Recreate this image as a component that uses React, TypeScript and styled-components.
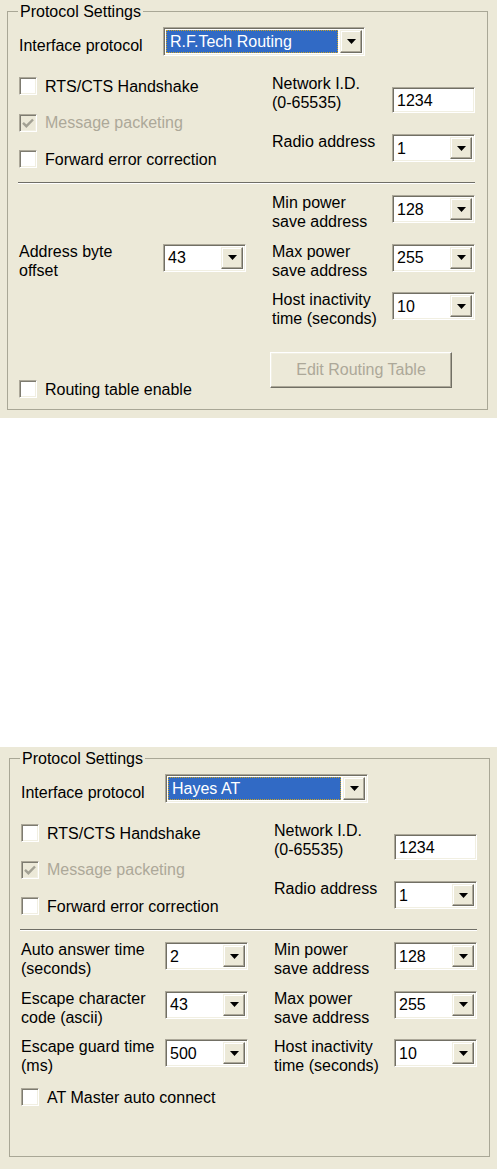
import React from 'react';
import styled, { createGlobalStyle } from 'styled-components';

const GlobalStyle = createGlobalStyle`
  html, body { margin: 0; padding: 0; background: #ffffff; }
  body {
    font-family: "Liberation Sans", Arial, sans-serif;
    font-size: 16px;
    color: #000000;
  }
  * { box-sizing: border-box; }
`;

const COLUMNS = '144px 83px 26px 120px 83px';

const Page = styled.main`
  width: 497px;
  display: flex;
  flex-direction: column;
  gap: 329px;
`;

const Panel = styled.section<{ $shift: number; $height: number }>`
  height: ${(p) => p.$height}px;
  background: #ece9d8;
  padding: 2px 0 0 ${(p) => 7 + p.$shift}px;
`;

const GroupBox = styled.fieldset`
  margin: 0;
  width: 481px;
  height: 408px;
  min-inline-size: 0;
  padding: 6px 11px 0 11px;
  border: 1px solid #a9a796;
  border-radius: 0;
`;

const Legend = styled.legend`
  padding: 0 2px;
  margin-left: -1px;
  line-height: 19px;
  font-size: 16px;
`;

const InterfaceRow = styled.div`
  display: flex;
  align-items: flex-end;
  height: 29px;
`;

const RowLabel = styled.span`
  width: 144px;
  line-height: 19px;
  margin-bottom: 1px;
`;

const UpperBody = styled.div`
  display: grid;
  grid-template-columns: 253px 203px;
  height: 126px;
`;

const CheckColumn = styled.div`
  display: flex;
  flex-direction: column;
  padding-top: 21px;
  gap: 18.5px;
`;

const FieldColumn = styled.div`
  display: flex;
  flex-direction: column;
  padding-top: 18px;
`;

const NetworkField = styled.div`
  display: flex;
  align-items: flex-start;
  height: 58px;
`;

const RadioField = styled.div`
  display: flex;
  align-items: flex-start;
`;

const FieldLabel = styled.span`
  width: 120px;
  line-height: 19px;
  white-space: pre-line;
`;

const ControlSlot = styled.div<{ $top: number }>`
  padding-top: ${(p) => p.$top}px;
`;

const Separator = styled.hr`
  margin: 0 0 0 -1px;
  width: 457px;
  height: 2px;
  border: 0;
  border-top: 1px solid #6f6e66;
  border-bottom: 1px solid #ffffff;
`;

const LowerGrid = styled.div`
  display: grid;
  grid-template-columns: ${COLUMNS};
  grid-template-rows: repeat(3, 48.5px);
  margin-top: 9px;
`;

const GridLabel = styled.span<{ $col: number; $row: number }>`
  grid-column: ${(p) => p.$col};
  grid-row: ${(p) => p.$row};
  line-height: 19px;
  white-space: pre-line;
`;

const GridControl = styled.div<{ $col: number; $row: number }>`
  grid-column: ${(p) => p.$col};
  grid-row: ${(p) => p.$row};
  padding-top: 2px;
`;

const Footer = styled.div`
  display: grid;
  grid-template-columns: 253px 203px;
  align-items: start;
`;

const FooterCheck = styled.div<{ $top: number }>`
  margin-top: ${(p) => p.$top}px;
`;

const ActionButton = styled.button`
  width: 182px;
  height: 36px;
  margin: 13.5px 0 0 -2px;
  padding: 0;
  background: #ece9d8;
  color: #aca899;
  font-family: inherit;
  font-size: 16px;
  border: 1px solid;
  border-color: #ffffff #716f64 #716f64 #ffffff;
  box-shadow: inset -1px -1px 0 #aca899, inset 1px 1px 0 #f1efe2;
`;

const CheckRow = styled.div<{ $disabled: boolean }>`
  display: flex;
  align-items: center;
  gap: 8px;
  height: 18px;
  line-height: 19px;
  color: ${(p) => (p.$disabled ? '#aca899' : '#000000')};
  white-space: nowrap;
`;

const CheckSquare = styled.span<{ $disabled: boolean }>`
  flex: none;
  width: 18px;
  height: 18px;
  display: flex;
  align-items: center;
  justify-content: center;
  background: ${(p) => (p.$disabled ? '#ece9d8' : '#ffffff')};
  border: 1px solid;
  border-color: #aca899 #ffffff #ffffff #aca899;
  box-shadow: inset 1px 1px 0 #7d7b70, inset -1px -1px 0 #f1efe2;
`;

const ComboFrame = styled.div<{ $width: number; $height: number }>`
  width: ${(p) => p.$width}px;
  height: ${(p) => p.$height}px;
  display: flex;
  align-items: stretch;
  padding: 2px;
  background: #ffffff;
  border: 1px solid;
  border-color: #aca899 #ffffff #ffffff #aca899;
  box-shadow: inset 1px 1px 0 #716f64, inset -1px -1px 0 #f1efe2;
`;

const ComboValue = styled.span<{ $selected: boolean }>`
  flex: 1;
  display: flex;
  align-items: center;
  margin-right: 2px;
  padding-left: ${(p) => (p.$selected ? 3 : 1)}px;
  line-height: 19px;
  white-space: nowrap;
  overflow: hidden;
  background: ${(p) => (p.$selected ? '#316ac5' : 'transparent')};
  color: ${(p) => (p.$selected ? '#ffffff' : '#000000')};
  border: 1px dotted ${(p) => (p.$selected ? '#c9a227' : 'transparent')};
`;

const DropButton = styled.span`
  flex: none;
  width: 22px;
  display: flex;
  align-items: center;
  justify-content: center;
  background: #ece9d8;
  border: 1px solid;
  border-color: #f1efe2 #716f64 #716f64 #f1efe2;
  box-shadow: inset -1px -1px 0 #aca899, inset 1px 1px 0 #ffffff;
`;

const TextBox = styled.div`
  width: 83px;
  height: 26px;
  margin-top: 13px;
  display: flex;
  align-items: center;
  padding-left: 4px;
  background: #ffffff;
  border: 1px solid;
  border-color: #aca899 #ffffff #ffffff #aca899;
  box-shadow: inset 1px 1px 0 #716f64, inset -1px -1px 0 #f1efe2;
  line-height: 19px;
`;

function Combo({
  value,
  width = 83,
  height = 28,
  selected = false,
}: {
  value: string;
  width?: number;
  height?: number;
  selected?: boolean;
}) {
  return (
    <ComboFrame $width={width} $height={height}>
      <ComboValue $selected={selected}>{value}</ComboValue>
      <DropButton>
        <svg width="9" height="5" viewBox="0 0 9 5">
          <path d="M0 0H9L4.5 5Z" fill="#000000" />
        </svg>
      </DropButton>
    </ComboFrame>
  );
}

function Check({
  label,
  checked = false,
  disabled = false,
}: {
  label: string;
  checked?: boolean;
  disabled?: boolean;
}) {
  return (
    <CheckRow $disabled={disabled}>
      <CheckSquare $disabled={disabled}>
        {checked && (
          <svg width="12" height="10" viewBox="0 0 12 10">
            <path d="M1 4.8 L4.4 8.2 L11 1.5" stroke="#a3a194" strokeWidth="2.4" fill="none" />
          </svg>
        )}
      </CheckSquare>
      <span>{label}</span>
    </CheckRow>
  );
}

type Row = { row: number; label: string; value: string };

const rightRows: Row[] = [
  { row: 1, label: 'Min power\nsave address', value: '128' },
  { row: 2, label: 'Max power\nsave address', value: '255' },
  { row: 3, label: 'Host inactivity\ntime (seconds)', value: '10' },
];

interface PanelProps {
  protocol: string;
  protocolWidth: number;
  shift: number;
  height: number;
  leftRows: Row[];
  footerCheck: string;
  footerCheckTop: number;
  showRoutingButton: boolean;
}

function ProtocolPanel(p: PanelProps) {
  return (
    <Panel $shift={p.shift} $height={p.height}>
      <GroupBox>
        <Legend>Protocol Settings</Legend>
        <InterfaceRow>
          <RowLabel>Interface protocol</RowLabel>
          <Combo value={p.protocol} width={p.protocolWidth} height={29} selected />
        </InterfaceRow>
        <UpperBody>
          <CheckColumn>
            <Check label="RTS/CTS Handshake" />
            <Check label="Message packeting" checked disabled />
            <Check label="Forward error correction" />
          </CheckColumn>
          <FieldColumn>
            <NetworkField>
              <FieldLabel>{'Network I.D.\n(0-65535)'}</FieldLabel>
              <TextBox>1234</TextBox>
            </NetworkField>
            <RadioField>
              <FieldLabel>Radio address</FieldLabel>
              <ControlSlot $top={2}>
                <Combo value="1" />
              </ControlSlot>
            </RadioField>
          </FieldColumn>
        </UpperBody>
        <Separator />
        <LowerGrid>
          {p.leftRows.map((r) => (
            <React.Fragment key={r.label}>
              <GridLabel $col={1} $row={r.row}>{r.label}</GridLabel>
              <GridControl $col={2} $row={r.row}>
                <Combo value={r.value} />
              </GridControl>
            </React.Fragment>
          ))}
          {rightRows.map((r) => (
            <React.Fragment key={r.label}>
              <GridLabel $col={4} $row={r.row}>{r.label}</GridLabel>
              <GridControl $col={5} $row={r.row}>
                <Combo value={r.value} />
              </GridControl>
            </React.Fragment>
          ))}
        </LowerGrid>
        <Footer>
          <FooterCheck $top={p.footerCheckTop}>
            <Check label={p.footerCheck} />
          </FooterCheck>
          {p.showRoutingButton && <ActionButton disabled>Edit Routing Table</ActionButton>}
        </Footer>
      </GroupBox>
    </Panel>
  );
}

export default function App() {
  return (
    <>
      <GlobalStyle />
      <Page>
        <ProtocolPanel
          protocol="R.F.Tech Routing"
          protocolWidth={202}
          shift={0}
          height={418}
          leftRows={[{ row: 2, label: 'Address byte\noffset', value: '43' }]}
          footerCheck="Routing table enable"
          footerCheckTop={41.5}
          showRoutingButton
        />
        <ProtocolPanel
          protocol="Hayes AT"
          protocolWidth={203}
          shift={2}
          height={422}
          leftRows={[
            { row: 1, label: 'Auto answer time\n(seconds)', value: '2' },
            { row: 2, label: 'Escape character\ncode (ascii)', value: '43' },
            { row: 3, label: 'Escape guard time\n(ms)', value: '500' },
          ]}
          footerCheck="AT Master auto connect"
          footerCheckTop={2.5}
          showRoutingButton={false}
        />
      </Page>
    </>
  );
}
